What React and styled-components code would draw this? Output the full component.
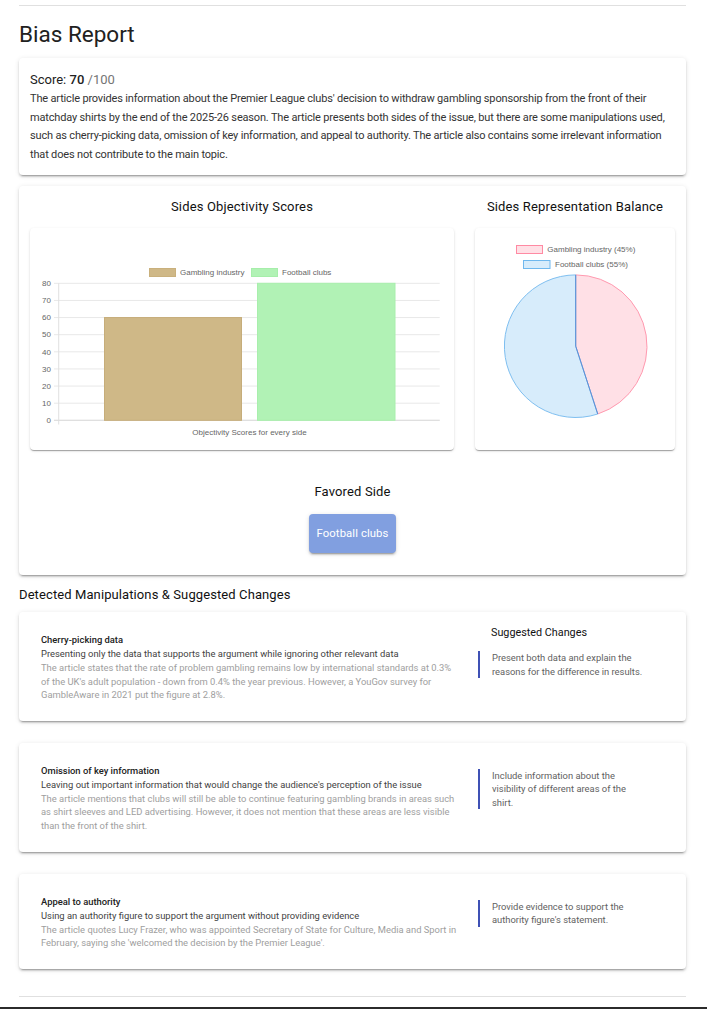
import React from "react";
import styled, { createGlobalStyle } from "styled-components";

const GlobalStyle = createGlobalStyle`
  html, body { margin: 0; padding: 0; background: #fff; }
  body { font-family: Roboto, "Noto Sans", Arial, sans-serif; color: rgba(0,0,0,0.87); }
  * { box-sizing: border-box; }
`;

const Page = styled.div`
  padding: 5px 21px 0 19px;
`;

const Rule = styled.div`
  height: 1px;
  background: #e0e0e0;
  margin-top: ${(p) => p.$mt || 0}px;
`;

const Title = styled.h1`
  margin: 13px 0 9px;
  font-size: 22.5px;
  font-weight: 400;
  line-height: 30px;
  color: #212121;
`;

const Card = styled.div`
  background: #fff;
  border-radius: 4px;
  box-shadow: 0 3px 1px -2px rgba(0,0,0,.2), 0 2px 2px 0 rgba(0,0,0,.14), 0 1px 5px 0 rgba(0,0,0,.12);
`;

const SummaryCard = styled(Card)`
  padding: 12px 11px 11px;
`;

const Score = styled.div`
  font-size: 13px;
  line-height: 20px;
  color: #212121;
  b { font-weight: 500; }
  span { color: #757575; }
`;

const Summary = styled.p`
  margin: 0;
  font-size: 11px;
  line-height: 18.5px;
  letter-spacing: -0.17px;
  color: #333;
`;

const ChartsCard = styled(Card)`
  margin-top: 11px;
  padding: 11px 11px 22px;
  display: flex;
  flex-direction: column;
  align-items: center;
`;

const ChartsRow = styled.div`
  width: 100%;
  display: grid;
  grid-template-columns: 424px 1fr;
  column-gap: 21px;
`;

const ChartCol = styled.div`
  display: flex;
  flex-direction: column;
  align-items: center;
`;

const ChartTitle = styled.div`
  font-size: 13px;
  font-weight: 400;
  line-height: 20px;
  letter-spacing: 0.15px;
  color: #111;
  margin-bottom: 11px;
`;

const ChartBox = styled.div`
  width: 100%;
  height: 222px;
  border-radius: 4px;
  background: #fff;
  box-shadow: 0 2px 1px -1px rgba(0,0,0,.2), 0 1px 1px 0 rgba(0,0,0,.14), 0 1px 3px 0 rgba(0,0,0,.12);
  svg { display: block; }
`;

const FavoredTitle = styled.div`
  margin-top: 32px;
  font-size: 13px;
  font-weight: 400;
  line-height: 20px;
  letter-spacing: 0.15px;
  color: #111;
`;

const FavoredButton = styled.div`
  margin-top: 12px;
  height: 39px;
  width: 87px;
  display: flex;
  align-items: center;
  justify-content: center;
  border-radius: 4px;
  background: #819fe0;
  color: #fff;
  font-size: 11.3px;
  font-weight: 400;
  letter-spacing: 0.1px;
  box-shadow: 0 3px 1px -2px rgba(0,0,0,.2), 0 2px 2px 0 rgba(0,0,0,.14), 0 1px 5px 0 rgba(0,0,0,.12);
`;

const SectionTitle = styled.div`
  margin: 10px 0 7px;
  font-size: 13px;
  font-weight: 400;
  line-height: 20px;
  letter-spacing: 0.1px;
  color: #111;
`;

const ManipList = styled.div`
  display: flex;
  flex-direction: column;
  gap: 22px;
`;

const ManipCard = styled(Card)`
  display: grid;
  grid-template-columns: 416px 1fr;
  column-gap: 21px;
  padding: 11px 22px 19px;
  align-items: start;
`;

const ManipLeft = styled.div`
  padding-top: 10px;
`;

const ManipName = styled.div`
  font-size: 9.4px;
  font-weight: 500;
  line-height: 14px;
  color: #212121;
`;

const ManipDesc = styled.div`
  font-size: 9.4px;
  line-height: 14px;
  color: #424242;
`;

const ManipDetail = styled.div`
  font-size: 9.4px;
  line-height: 13.6px;
  color: #9e9e9e;
`;

const SuggestHeader = styled.div`
  font-size: 10.8px;
  font-weight: 400;
  line-height: 20px;
  padding-left: 13px;
  color: #111;
`;

const Quote = styled.div`
  margin-top: ${(p) => (p.$withHeader ? 8 : 15)}px;
  border-left: 2px solid #3f51b5;
  padding-left: 12px;
  max-width: 168px;
  font-size: 9.4px;
  line-height: 13.5px;
  color: #616161;
`;

const Footer = styled.div`
  margin-top: 10px;
  height: 40px;
  background: #2b2b2b;
`;

const BarChart = () => {
  const y0 = 192.3;
  const step = 1.7125;
  const ticks = [0, 10, 20, 30, 40, 50, 60, 70, 80];
  const font = { fontFamily: "'Liberation Sans', Arial, sans-serif", fontSize: 8, fill: "#666" };
  return (
    <svg width="424" height="222" viewBox="0 0 424 222">
      <rect x="119.5" y="40.5" width="26" height="8" fill="#cfb887" stroke="#c9b07c" strokeWidth="1" />
      <text x="150" y="47" {...font}>Gambling industry</text>
      <rect x="221.5" y="40.5" width="26" height="8" fill="#b1f2b5" stroke="#a6eeaa" strokeWidth="1" />
      <text x="252" y="47" {...font}>Football clubs</text>
      {ticks.map((t) => {
        const y = y0 - t * step;
        return (
          <g key={t}>
            <line x1="24" x2="409.7" y1={y} y2={y} stroke="#e8e8e8" strokeWidth="1" />
            <text x="21" y={y + 2.8} textAnchor="end" {...font}>{t}</text>
          </g>
        );
      })}
      <line x1="28.7" x2="28.7" y1="55.3" y2="196.5" stroke="#e0e0e0" strokeWidth="1" />
      <line x1="24" x2="409.7" y1={y0} y2={y0} stroke="#dcdcdc" strokeWidth="1" />
      <rect x="74.5" y={y0 - 60 * step} width="137" height={60 * step} fill="#cfb887" stroke="#c6ad7a" strokeWidth="1" />
      <rect x="227.5" y={y0 - 80 * step} width="137.5" height={80 * step} fill="#b1f2b5" stroke="#a8efac" strokeWidth="1" />
      <text x="219.5" y="206.5" textAnchor="middle" {...font}>Objectivity Scores for every side</text>
    </svg>
  );
};

const PieChart = () => {
  const cx = 100.7;
  const cy = 118.2;
  const r = 71.3;
  const a = (162 * Math.PI) / 180;
  const ex = cx + r * Math.sin(a);
  const ey = cy - r * Math.cos(a);
  const font = { fontFamily: "'Liberation Sans', Arial, sans-serif", fontSize: 8, fill: "#666" };
  return (
    <svg width="200" height="222" viewBox="0 0 200 222">
      <rect x="41.5" y="17.5" width="26" height="8" fill="#ffe0e6" stroke="#ff8aa3" strokeWidth="1" />
      <text x="72.3" y="24" {...font}>Gambling industry (45%)</text>
      <rect x="48.5" y="32.5" width="26.5" height="8" fill="#d7ecfb" stroke="#6fb8ee" strokeWidth="1" />
      <text x="80" y="39" {...font}>Football clubs (55%)</text>
      <path
        d={`M ${cx} ${cy} L ${cx} ${cy - r} A ${r} ${r} 0 0 1 ${ex} ${ey} Z`}
        fill="#ffe0e6"
        stroke="#ff9ab0"
        strokeWidth="1"
      />
      <path
        d={`M ${cx} ${cy} L ${ex} ${ey} A ${r} ${r} 0 1 1 ${cx} ${cy - r} Z`}
        fill="#d7ecfb"
        stroke="#7fbff0"
        strokeWidth="1"
      />
      <line x1={cx} y1={cy - r} x2={cx} y2={cy} stroke="#5b8fd6" strokeWidth="1" />
      <line x1={cx} y1={cy} x2={ex} y2={ey} stroke="#5b8fd6" strokeWidth="1" />
    </svg>
  );
};

const manipulations = [
  {
    name: "Cherry-picking data",
    desc: "Presenting only the data that supports the argument while ignoring other relevant data",
    detail:
      "The article states that the rate of problem gambling remains low by international standards at 0.3% of the UK's adult population - down from 0.4% the year previous. However, a YouGov survey for GambleAware in 2021 put the figure at 2.8%.",
    suggestion: "Present both data and explain the reasons for the difference in results.",
    header: true,
  },
  {
    name: "Omission of key information",
    desc: "Leaving out important information that would change the audience's perception of the issue",
    detail:
      "The article mentions that clubs will still be able to continue featuring gambling brands in areas such as shirt sleeves and LED advertising. However, it does not mention that these areas are less visible than the front of the shirt.",
    suggestion: "Include information about the visibility of different areas of the shirt.",
  },
  {
    name: "Appeal to authority",
    desc: "Using an authority figure to support the argument without providing evidence",
    detail:
      "The article quotes Lucy Frazer, who was appointed Secretary of State for Culture, Media and Sport in February, saying she 'welcomed the decision by the Premier League'.",
    suggestion: "Provide evidence to support the authority figure's statement.",
  },
];

export default function App() {
  return (
    <>
      <GlobalStyle />
      <Page>
        <Rule />
        <Title>Bias Report</Title>
        <SummaryCard>
          <Score>
            Score: <b>70</b> <span>/100</span>
          </Score>
          <Summary>
            The article provides information about the Premier League clubs' decision to withdraw gambling
            sponsorship from the front of their matchday shirts by the end of the 2025-26 season. The article
            presents both sides of the issue, but there are some manipulations used, such as cherry-picking data,
            omission of key information, and appeal to authority. The article also contains some irrelevant
            information that does not contribute to the main topic.
          </Summary>
        </SummaryCard>

        <ChartsCard>
          <ChartsRow>
            <ChartCol>
              <ChartTitle>Sides Objectivity Scores</ChartTitle>
              <ChartBox>
                <BarChart />
              </ChartBox>
            </ChartCol>
            <ChartCol>
              <ChartTitle>Sides Representation Balance</ChartTitle>
              <ChartBox>
                <PieChart />
              </ChartBox>
            </ChartCol>
          </ChartsRow>
          <FavoredTitle>Favored Side</FavoredTitle>
          <FavoredButton>Football clubs</FavoredButton>
        </ChartsCard>

        <SectionTitle>Detected Manipulations &amp; Suggested Changes</SectionTitle>
        <ManipList>
          {manipulations.map((m) => (
            <ManipCard key={m.name}>
              <ManipLeft>
                <ManipName>{m.name}</ManipName>
                <ManipDesc>{m.desc}</ManipDesc>
                <ManipDetail>{m.detail}</ManipDetail>
              </ManipLeft>
              <div>
                {m.header && <SuggestHeader>Suggested Changes</SuggestHeader>}
                <Quote $withHeader={m.header}>{m.suggestion}</Quote>
              </div>
            </ManipCard>
          ))}
        </ManipList>
        <Rule $mt={27} />
      </Page>
      <Footer />
    </>
  );
}
